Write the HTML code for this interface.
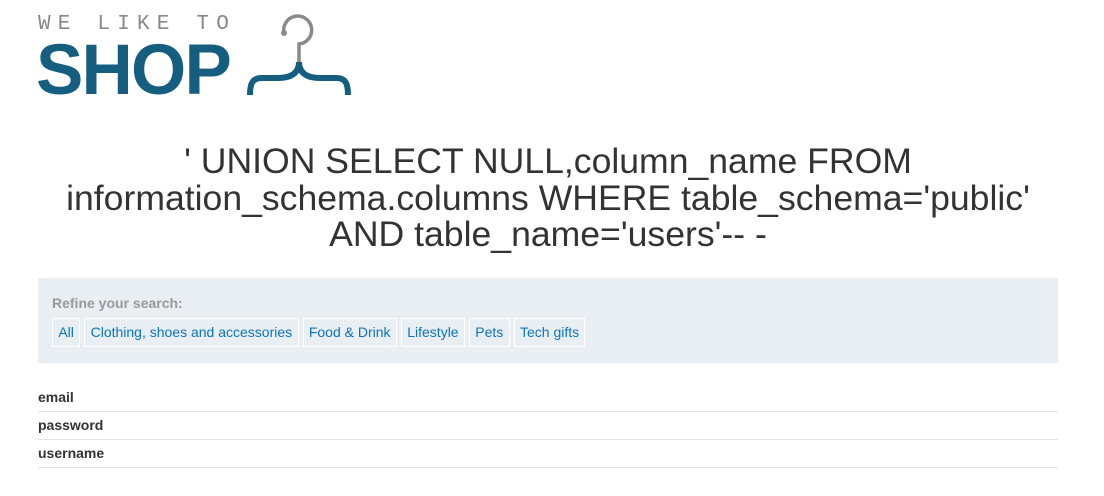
<!DOCTYPE html>
<html><head><meta charset="utf-8"><style>
body{margin:0;width:1104px;height:496px;background:#fff;font-family:"Liberation Sans",sans-serif;position:relative;overflow:hidden}
.a{position:absolute}
.we{left:38px;top:13px;font-family:"Liberation Mono",monospace;font-size:21px;color:#888;letter-spacing:7.2px;white-space:nowrap}
.shop{left:36px;top:35px;font-weight:bold;font-size:71px;color:#155e80;letter-spacing:-1.8px;line-height:71px}
h1{position:absolute;left:0;width:1096px;top:143px;margin:0;text-align:center;font-weight:normal;font-size:35.6px;line-height:36.5px;color:#333;white-space:nowrap}
.panel{left:38px;top:278px;width:1020px;height:85px;background:#e8eef1}
.ref{left:14px;top:17px;font-weight:bold;font-size:14px;color:#999}
.btns{left:14px;top:40px;display:flex;gap:4px}
.btns span{border:1px solid #fff;height:29px;line-height:27px;padding:0 5.35px;font-size:14px;color:#0a74c0;box-sizing:border-box}
.row{left:38px;width:1020px;height:27px;border-bottom:1px solid #e3e3e3;font-weight:bold;font-size:14px;color:#333;line-height:27px}
</style></head><body>
<div class="a we">WE LIKE TO</div>
<div class="a shop">SHOP</div>
<svg class="a" style="left:0;top:0" width="400" height="110">
<path d="M284 33 A14 14 0 1 1 299 44 L299 63" fill="none" stroke="#8a8a8a" stroke-width="3.5"/>
<circle cx="284" cy="33" r="3" fill="#8a8a8a"/>
<path d="M299 62 C299 74 290 78 278 78 L262 78 C252 78 250 84 250 95 M299 62 C299 74 308 78 320 78 L336 78 C346 78 348 84 348 95" fill="none" stroke="#155e80" stroke-width="6"/>
</svg>
<h1>' UNION SELECT NULL,column_name FROM<br>information_schema.columns WHERE table_schema='public'<br>AND table_name='users'-- -</h1>
<div class="a panel">
<div class="a ref">Refine your search:</div>
<div class="a btns"><span>All</span><span>Clothing, shoes and accessories</span><span>Food &amp; Drink</span><span>Lifestyle</span><span>Pets</span><span>Tech gifts</span></div>
</div>
<div class="a row" style="top:384px">email</div>
<div class="a row" style="top:412px">password</div>
<div class="a row" style="top:440px">username</div>
</body></html>
